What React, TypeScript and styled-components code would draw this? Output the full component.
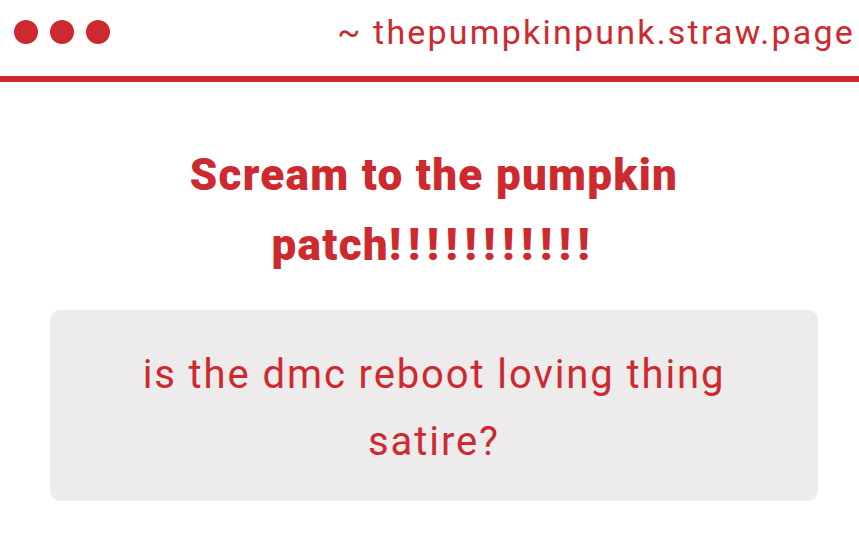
import React from 'react'
import styled, { createGlobalStyle } from 'styled-components'

const RED = '#cc2a2f'

const GlobalStyle = createGlobalStyle`
  html, body {
    margin: 0;
    padding: 0;
    background: #ffffff;
    font-family: Roboto, "Liberation Sans", sans-serif;
  }
`

const Page = styled.div`
  display: flex;
  flex-direction: column;
  min-height: 542px;
`

const TitleBar = styled.header`
  display: flex;
  align-items: center;
  justify-content: space-between;
  height: 64px;
  padding: 0 6px 12px 14px;
  border-bottom: 6px solid ${RED};
`

const Dots = styled.div`
  display: flex;
  gap: 12px;
`

const Dot = styled.span`
  width: 24px;
  height: 24px;
  border-radius: 50%;
  background: ${RED};
`

const Address = styled.span`
  font-size: 34px;
  letter-spacing: 2.2px;
  margin-right: -2px;
  color: ${RED};
  line-height: 1;
`

const Content = styled.main`
  display: flex;
  flex-direction: column;
  align-items: center;
  padding: 58px 41px 0 50px;
`

const Title = styled.h1`
  margin: 0;
  max-width: 600px;
  font-size: 44px;
  font-weight: 900;
  letter-spacing: 1.3px;
  line-height: 70px;
  text-align: center;
  color: ${RED};
`

const Bangs = styled.span`
  letter-spacing: 6.7px;
`

const QuestionCard = styled.div`
  box-sizing: border-box;
  width: 100%;
  margin-top: 30px;
  padding: 31px 70px 26px;
  border-radius: 10px;
  background: #edebec;
  font-size: 40px;
  letter-spacing: 1.9px;
  line-height: 67px;
  text-align: center;
  color: ${RED};
`

export default function App() {
  return (
    <Page>
      <GlobalStyle />
      <TitleBar>
        <Dots>
          <Dot />
          <Dot />
          <Dot />
        </Dots>
        <Address>~ thepumpkinpunk.straw.page</Address>
      </TitleBar>
      <Content>
        <Title>
          Scream to the pumpkin patch<Bangs>!!!!!!!!!!!</Bangs>
        </Title>
        <QuestionCard>is the dmc reboot loving thing satire?</QuestionCard>
      </Content>
    </Page>
  )
}
